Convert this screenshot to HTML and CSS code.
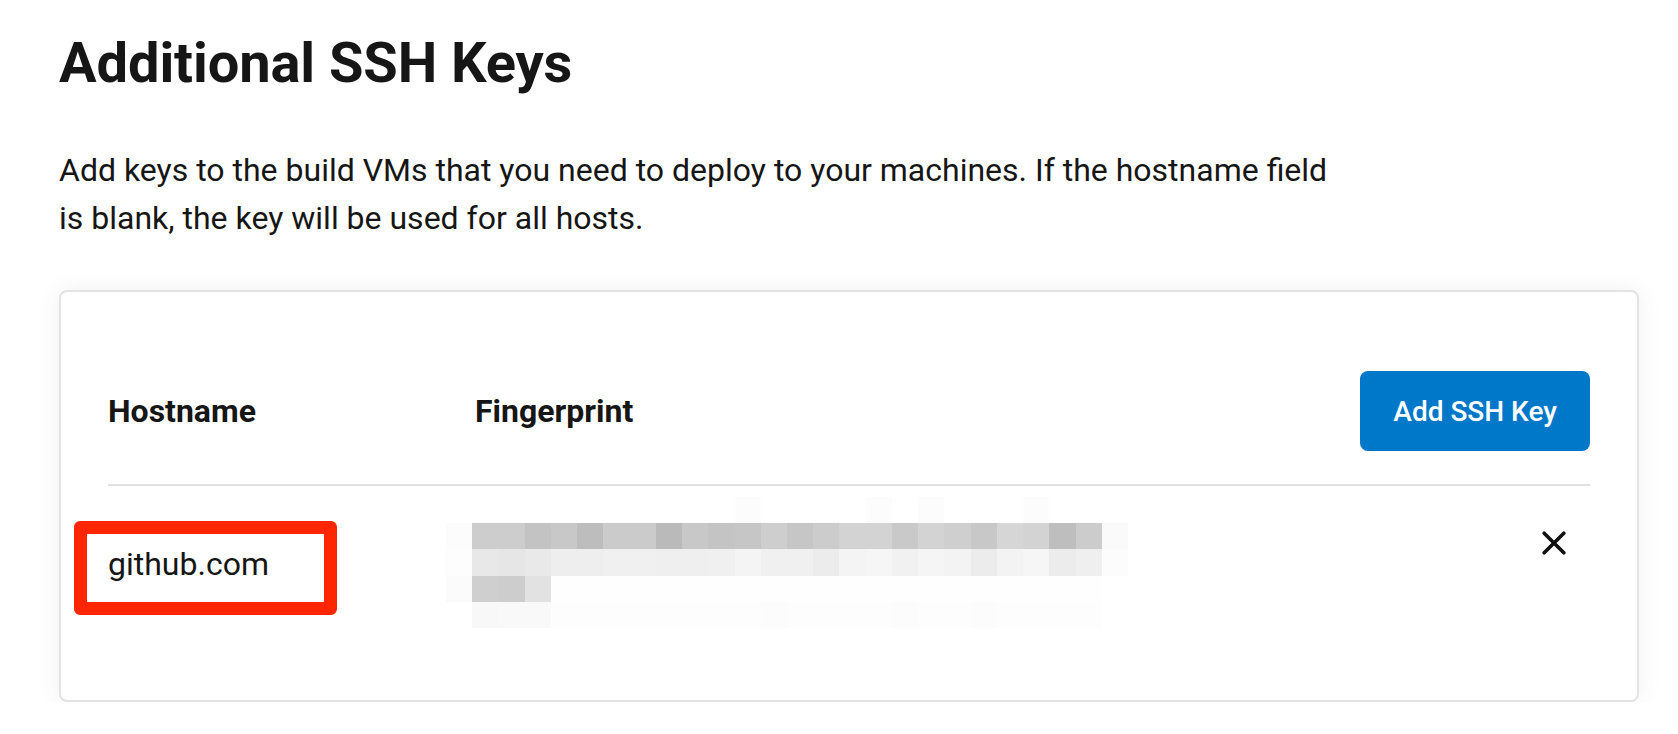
FILE: index.html
```html
<!DOCTYPE html>
<html lang="en">
<head>
<meta charset="utf-8">
<title>Additional SSH Keys</title>
<link rel="stylesheet" href="styles.css">
</head>
<body>
<main class="page">
  <h1 class="title">Additional SSH Keys</h1>
  <p class="intro">Add keys to the build VMs that you need to deploy to your machines. If the hostname field is blank, the key will be used for all hosts.</p>

  <section class="card">
    <div class="head-row">
      <div class="col-host">Hostname</div>
      <div class="col-fp">Fingerprint</div>
      <button class="btn-add" type="button">Add SSH Key</button>
    </div>
    <div class="key-row">
      <div class="col-host host-cell">
        <span class="host-text">github.com</span>
        <span class="highlight"></span>
      </div>
      <div class="col-fp fp-cell">
        <svg class="mosaic" width="682" height="131" viewBox="0 0 26 5" preserveAspectRatio="none" shape-rendering="crispEdges" aria-label="redacted fingerprint">
          <g>
            <rect x="11" y="0" width="1" height="1" fill="#fcfcfc"/>
            <rect x="16" y="0" width="1" height="1" fill="#fcfcfc"/>
            <rect x="18" y="0" width="1" height="1" fill="#fcfcfc"/>
            <rect x="22" y="0" width="1" height="1" fill="#fcfcfc"/>
          </g>
          <g>
            <rect x="0" y="1" width="1" height="1" fill="#fcfcfc"/>
            <rect x="1" y="1" width="1" height="1" fill="#cdcdcd"/>
            <rect x="2" y="1" width="1" height="1" fill="#cdcdcd"/>
            <rect x="3" y="1" width="1" height="1" fill="#c3c3c3"/>
            <rect x="4" y="1" width="1" height="1" fill="#c8c8c8"/>
            <rect x="5" y="1" width="1" height="1" fill="#bdbdbd"/>
            <rect x="6" y="1" width="1" height="1" fill="#cbcbcb"/>
            <rect x="7" y="1" width="1" height="1" fill="#cbcbcb"/>
            <rect x="8" y="1" width="1" height="1" fill="#bababa"/>
            <rect x="9" y="1" width="1" height="1" fill="#c8c8c8"/>
            <rect x="10" y="1" width="1" height="1" fill="#c4c4c4"/>
            <rect x="11" y="1" width="1" height="1" fill="#c6c6c6"/>
            <rect x="12" y="1" width="1" height="1" fill="#cecece"/>
            <rect x="13" y="1" width="1" height="1" fill="#c6c6c6"/>
            <rect x="14" y="1" width="1" height="1" fill="#cccccc"/>
            <rect x="15" y="1" width="1" height="1" fill="#d3d3d3"/>
            <rect x="16" y="1" width="1" height="1" fill="#d3d3d3"/>
            <rect x="17" y="1" width="1" height="1" fill="#c9c9c9"/>
            <rect x="18" y="1" width="1" height="1" fill="#d3d3d3"/>
            <rect x="19" y="1" width="1" height="1" fill="#cfcfcf"/>
            <rect x="20" y="1" width="1" height="1" fill="#c8c8c8"/>
            <rect x="21" y="1" width="1" height="1" fill="#d6d6d6"/>
            <rect x="22" y="1" width="1" height="1" fill="#d3d3d3"/>
            <rect x="23" y="1" width="1" height="1" fill="#bebebe"/>
            <rect x="24" y="1" width="1" height="1" fill="#cccccc"/>
            <rect x="25" y="1" width="1" height="1" fill="#fafafa"/>
          </g>
          <g>
            <rect x="0" y="2" width="1" height="1" fill="#fdfdfd"/>
            <rect x="1" y="2" width="1" height="1" fill="#e8e8e8"/>
            <rect x="2" y="2" width="1" height="1" fill="#e6e6e6"/>
            <rect x="3" y="2" width="1" height="1" fill="#e9e9e9"/>
            <rect x="4" y="2" width="1" height="1" fill="#eeeeee"/>
            <rect x="5" y="2" width="1" height="1" fill="#eeeeee"/>
            <rect x="6" y="2" width="1" height="1" fill="#f0f0f0"/>
            <rect x="7" y="2" width="1" height="1" fill="#f0f0f0"/>
            <rect x="8" y="2" width="1" height="1" fill="#efefef"/>
            <rect x="9" y="2" width="1" height="1" fill="#efefef"/>
            <rect x="10" y="2" width="1" height="1" fill="#f0f0f0"/>
            <rect x="11" y="2" width="1" height="1" fill="#f4f4f4"/>
            <rect x="12" y="2" width="1" height="1" fill="#f0f0f0"/>
            <rect x="13" y="2" width="1" height="1" fill="#f0f0f0"/>
            <rect x="14" y="2" width="1" height="1" fill="#ececec"/>
            <rect x="15" y="2" width="1" height="1" fill="#f4f4f4"/>
            <rect x="16" y="2" width="1" height="1" fill="#f6f6f6"/>
            <rect x="17" y="2" width="1" height="1" fill="#f1f1f1"/>
            <rect x="18" y="2" width="1" height="1" fill="#f5f5f5"/>
            <rect x="19" y="2" width="1" height="1" fill="#f3f3f3"/>
            <rect x="20" y="2" width="1" height="1" fill="#ececec"/>
            <rect x="21" y="2" width="1" height="1" fill="#f3f3f3"/>
            <rect x="22" y="2" width="1" height="1" fill="#f6f6f6"/>
            <rect x="23" y="2" width="1" height="1" fill="#ececec"/>
            <rect x="24" y="2" width="1" height="1" fill="#efefef"/>
            <rect x="25" y="2" width="1" height="1" fill="#fcfcfc"/>
          </g>
          <g>
            <rect x="0" y="3" width="1" height="1" fill="#fbfbfb"/>
            <rect x="1" y="3" width="1" height="1" fill="#cfcfcf"/>
            <rect x="2" y="3" width="1" height="1" fill="#cdcdcd"/>
            <rect x="3" y="3" width="1" height="1" fill="#e2e2e2"/>
            <rect x="4" y="3" width="21" height="1" fill="#fefefe"/>
          </g>
          <g>
            <rect x="1" y="4" width="1" height="1" fill="#f8f8f8"/>
            <rect x="2" y="4" width="2" height="1" fill="#f9f9f9"/>
            <rect x="4" y="4" width="21" height="1" fill="#fdfdfd"/>
            <rect x="12" y="4" width="1" height="1" fill="#fcfcfc"/>
            <rect x="17" y="4" width="1" height="1" fill="#fcfcfc"/>
            <rect x="20" y="4" width="1" height="1" fill="#fcfcfc"/>
          </g>
        </svg>
      </div>
      <button class="btn-remove" type="button" aria-label="Remove key">
        <svg width="24" height="24" viewBox="0 0 24 24"><path d="M2.2 2.2 L21.8 21.8 M21.8 2.2 L2.2 21.8" stroke="#111" stroke-width="3.6" stroke-linecap="round" fill="none"/></svg>
      </button>
    </div>
  </section>
</main>
</body>
</html>
```

FILE: styles.css
```css
* { box-sizing: border-box; }

html, body {
  margin: 0;
  background: #ffffff;
}

body {
  font-family: Roboto, "Liberation Sans", Arial, sans-serif;
  color: #161616;
}

.page {
  padding: 30px 39px 0 59px;
}

.title {
  margin: 0;
  font-size: 56px;
  font-weight: 700;
  line-height: 67px;
  letter-spacing: -0.1px;
}

.intro {
  margin: 49px 0 0;
  max-width: 1290px;
  font-size: 32px;
  font-weight: 400;
  line-height: 48px;
}

.card {
  margin-top: 48px;
  width: 1580px;
  border: 2px solid #e3e3e3;
  border-radius: 8px;
  padding: 0 47px;
  background: #fff;
  box-shadow: 0 0 26px rgba(0, 0, 0, 0.06);
}

.head-row {
  display: flex;
  align-items: center;
  padding: 79px 0 33px;
  border-bottom: 2px solid #e1e1e1;
  font-size: 32px;
  font-weight: 700;
}

.col-host {
  width: 367px;
  flex: none;
}

.col-fp {
  flex: 1;
}

.btn-add {
  height: 80px;
  padding: 0 33px;
  border: none;
  border-radius: 8px;
  background: #0078ca;
  color: #fff;
  font-family: inherit;
  font-size: 28px;
  font-weight: 500;
}

.key-row {
  display: flex;
  align-items: flex-start;
  padding-bottom: 72px;
}

.host-cell {
  position: relative;
  padding-top: 60px;
  font-size: 32px;
  line-height: 36px;
}

.host-text {
  display: block;
}

.highlight {
  position: absolute;
  top: 35px;
  left: -34px;
  width: 263px;
  height: 94px;
  border: 13px solid #ff2600;
  border-radius: 6px;
}

.fp-cell {
  padding-top: 11px;
}

.mosaic {
  display: block;
  margin-left: -29px;
}

.btn-remove {
  margin-top: 45px;
  margin-right: 24px;
  padding: 0;
  border: none;
  background: none;
  width: 24px;
  height: 24px;
}

.btn-remove svg {
  display: block;
}
```
